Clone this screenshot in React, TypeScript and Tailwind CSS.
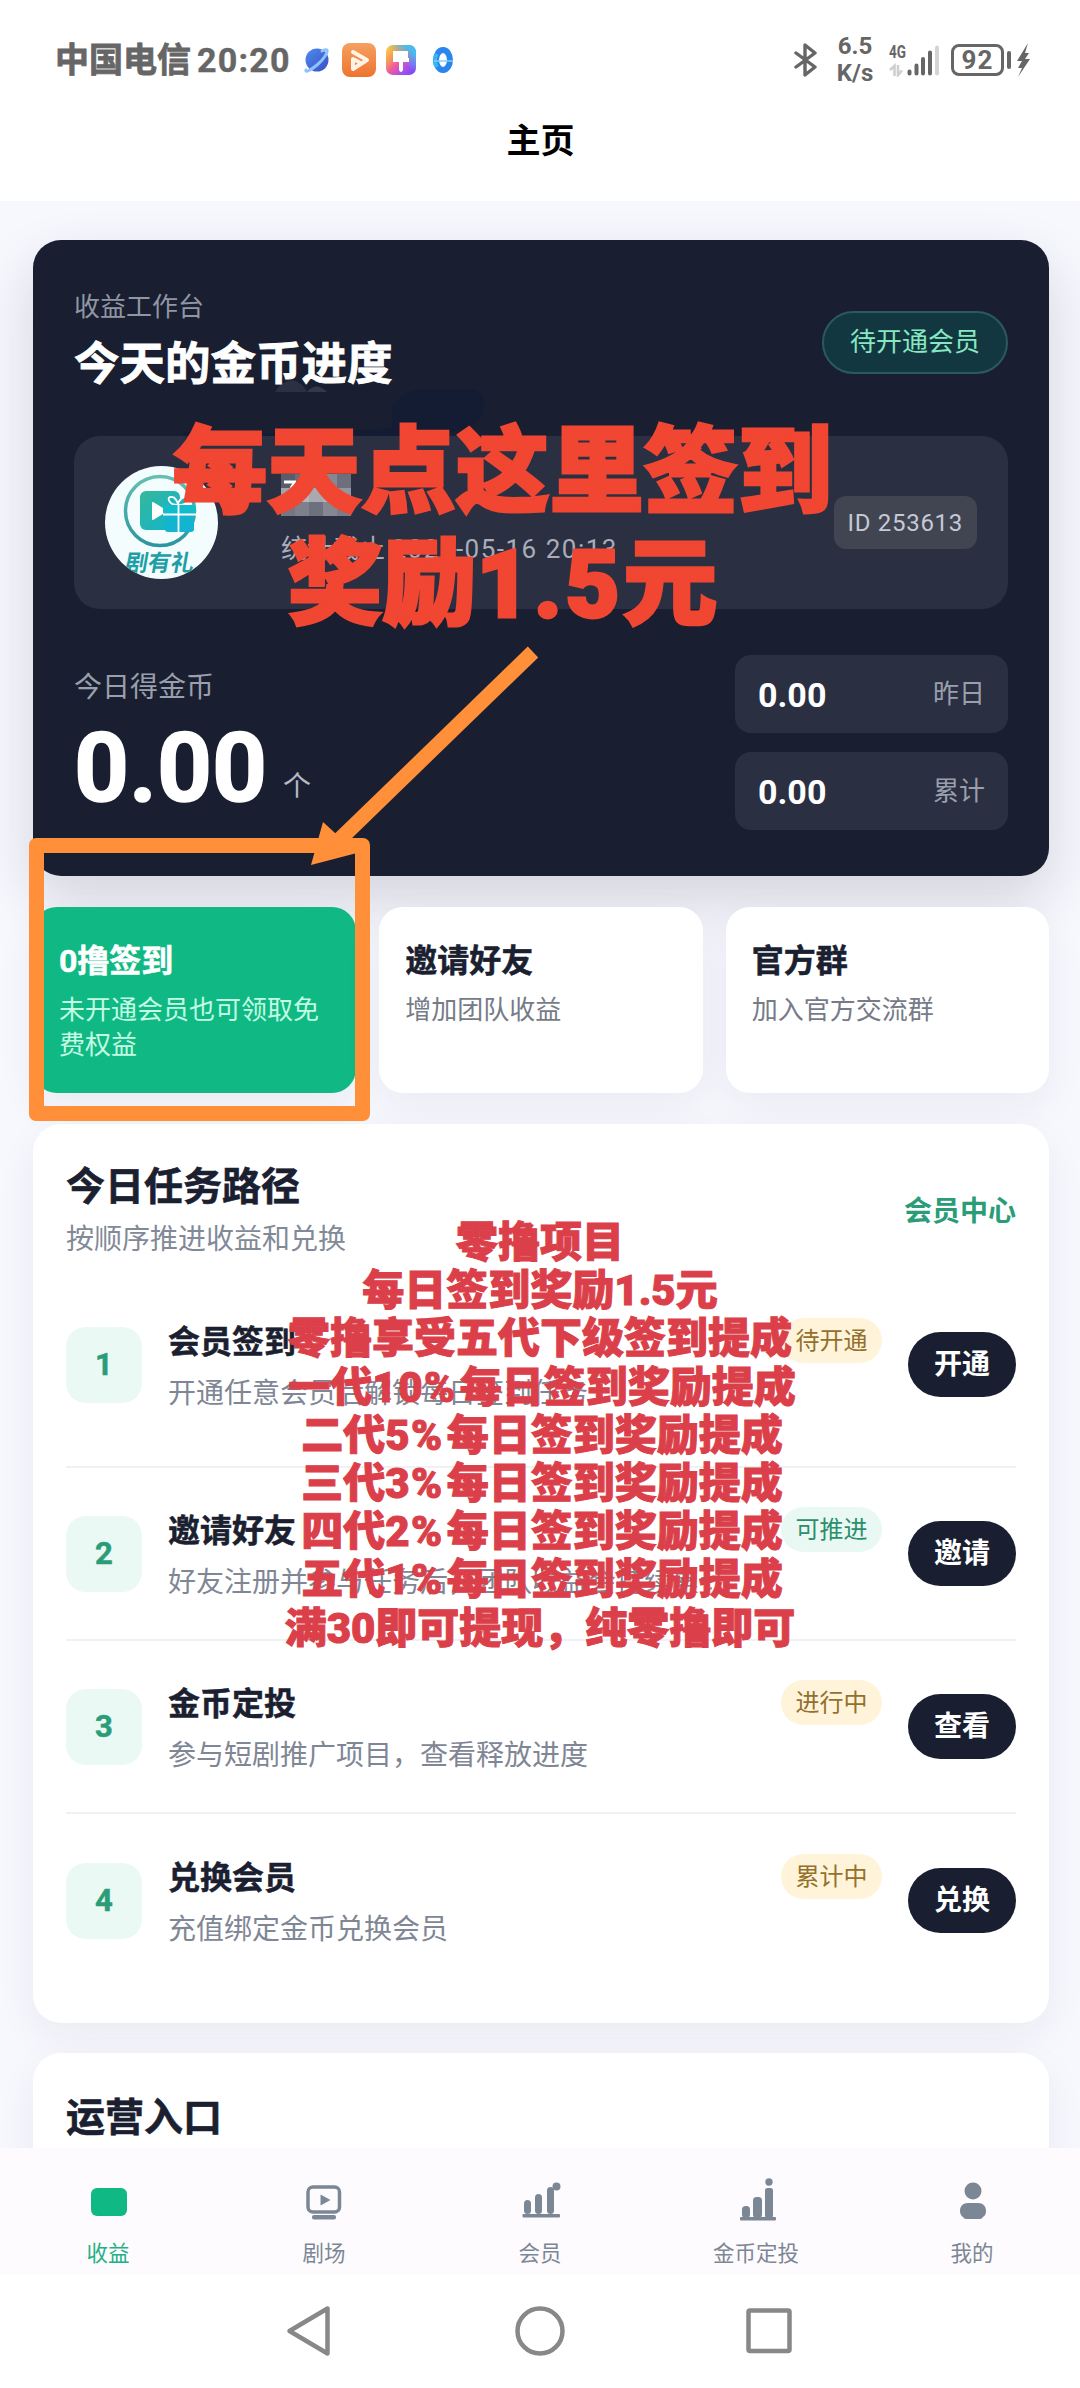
import type { ReactNode } from "react";

interface Task {
  title: string;
  description: string;
  badge: string;
  badgeClass: string;
  action: string;
}

const tasks: Task[] = [
  {
    title: "会员签到",
    description: "开通任意会员后解锁每日签到任务",
    badge: "待开通",
    badgeClass: "bg-[#fff4d9] text-[#94702c]",
    action: "开通",
  },
  {
    title: "邀请好友",
    description: "好友注册并参与任务后，团队收益会持续累计",
    badge: "可推进",
    badgeClass: "bg-[#eaf8f3] text-[#2b8f6c]",
    action: "邀请",
  },
  {
    title: "金币定投",
    description: "参与短剧推广项目，查看释放进度",
    badge: "进行中",
    badgeClass: "bg-[#fff4d9] text-[#94702c]",
    action: "查看",
  },
  {
    title: "兑换会员",
    description: "充值绑定金币兑换会员",
    badge: "累计中",
    badgeClass: "bg-[#fff4d9] text-[#94702c]",
    action: "兑换",
  },
];

const levelRates = [
  { level: "一代", rate: "10%" },
  { level: "二代", rate: "5%" },
  { level: "三代", rate: "3%" },
  { level: "四代", rate: "2%" },
  { level: "五代", rate: "1%" },
];

function StatusBar() {
  return (
    <div className="flex h-[120px] items-center justify-between pl-[55px] pr-[50px] text-[#666]">
      <div className="flex items-center">
        <span className="text-[34px] leading-none font-bold [-webkit-text-stroke:0.8px]">中国电信</span>
        <span className="ml-[6px] w-[94px] text-[34px] leading-none font-bold tracking-[1.200px] [-webkit-text-stroke:0.4px]">20:20</span>
        <svg className="ml-[13px]" width="150" height="36" viewBox="304 42 150 36">
          <defs>
            <linearGradient id="planet" x1="0" y1="0" x2="1" y2="1">
              <stop offset="0" stopColor="#4d8bf0" />
              <stop offset="1" stopColor="#3a4fc4" />
            </linearGradient>
            <linearGradient id="orange" x1="0" y1="0" x2="0" y2="1">
              <stop offset="0" stopColor="#f5a061" />
              <stop offset="1" stopColor="#ee742f" />
            </linearGradient>
            <linearGradient id="rainbow" x1="0" y1="0" x2="1" y2="1">
              <stop offset="0" stopColor="#f6dc3c" />
              <stop offset="0.3" stopColor="#f79a58" />
              <stop offset="0.5" stopColor="#ef5aa0" />
              <stop offset="0.75" stopColor="#a24ff0" />
              <stop offset="1" stopColor="#6a48f0" />
            </linearGradient>
            <linearGradient id="sky" x1="0" y1="1" x2="1" y2="0">
              <stop offset="0.5" stopColor="#3fc0f0" stopOpacity="0" />
              <stop offset="0.85" stopColor="#3fc0f0" />
            </linearGradient>
          </defs>
          <circle cx="317" cy="60" r="11.5" fill="url(#planet)" />
          <path d="M306 70c-1 3 5 0 11-5s11-12 10-15c-1-1-3 0-5 1" fill="none" stroke="#8fc4fa" strokeWidth="3" strokeLinecap="round" />
          <rect x="342" y="43" width="34" height="34" rx="8" fill="url(#orange)" />
          <path d="M353 52l14 8-14 9v-10l6 3" fill="none" stroke="#fff3e6" strokeWidth="4" strokeLinejoin="round" strokeLinecap="round" />
          <rect x="386" y="45" width="30" height="30" rx="7" fill="url(#rainbow)" />
          <rect x="386" y="45" width="30" height="30" rx="7" fill="url(#sky)" />
          <path d="M393 51h15v7h1v4h-6v8q-2 4-4 0v-8h-6z" fill="#fff" />
          <ellipse cx="443" cy="60" rx="7" ry="10" fill="none" stroke="#2a86ee" strokeWidth="6" />
          <path d="M437 54q-4 6 0 13" fill="none" stroke="#35b7f4" strokeWidth="4" />
          <path d="M434 61h19" stroke="#7fd0fb" strokeWidth="1.5" />
        </svg>
      </div>
      <div className="flex items-center">
        <svg width="24" height="36" viewBox="0 0 24 36" fill="none" stroke="#666" strokeWidth="3.4" strokeLinejoin="round" strokeLinecap="round">
          <path d="M2 11l19 14-10 8V3l10 8L2 25" />
        </svg>
        <div className="ml-[17px] flex w-[40px] flex-col items-center text-[24px] leading-[27px] font-bold">
          <span>6.5</span>
          <span>K/s</span>
        </div>
        <div className="relative ml-[14px] h-[34px] w-[52px]">
          <span className="absolute top-0 left-0 origin-left scale-x-75 text-[18px] leading-[17px] font-bold">4G</span>
          <svg className="absolute inset-0" width="52" height="34" viewBox="888 42 52 34">
            <g stroke="#cfcfcf" strokeWidth="2.6" fill="none">
              <path d="M889 69l4.500-4v10M897 64v10l4-4.500" />
            </g>
            <g stroke="#666" strokeWidth="4" strokeLinecap="round">
              <path d="M908.500 70.500v2M915.500 64.500v8M922 58v14.500M929 51.500v21" />
              <path d="M936 46.500v26" stroke="#d4d4d4" />
            </g>
          </svg>
        </div>
        <div className="ml-[10px] flex h-[32px] w-[53px] items-center justify-center rounded-[8px] border-[3px] border-[#666] text-[26px] leading-none font-bold tracking-[1px]">
          92
        </div>
        <div className="ml-[3px] h-[18px] w-1 rounded-sm bg-[#666]" />
        <svg className="ml-[5px]" width="14" height="34" viewBox="0 0 14 34">
          <path d="M12 0L1 18h5l-4 7h4L2 34 14 16H9l4-6H9z" fill="#666" />
        </svg>
      </div>
    </div>
  );
}

function AppLogo() {
  return (
    <div className="h-[113px] w-[113px] shrink-0 overflow-hidden rounded-full bg-[#f4fdfe]">
      <svg width="113" height="113" viewBox="105 466 113 113">
        <defs>
          <linearGradient id="teal" x1="0" y1="0" x2="1" y2="1">
            <stop offset="0" stopColor="#35b89a" />
            <stop offset="1" stopColor="#10b4cf" />
          </linearGradient>
          <linearGradient id="ring" x1="0" y1="0" x2="0" y2="1">
            <stop offset="0" stopColor="#64c0ae" />
            <stop offset="1" stopColor="#2b95a0" />
          </linearGradient>
        </defs>
        <circle cx="160" cy="511" r="34.500" fill="none" stroke="url(#ring)" strokeWidth="3.500" />
        <rect x="140" y="491" width="40" height="39" rx="6" fill="url(#teal)" />
        <path d="M153 503l13 8-13 8z" fill="#fff" stroke="#fff" strokeWidth="2" strokeLinejoin="round" />
        <path d="M178 505c-10 0-12-9-6-8 3 0 6 5 6 8 0-3 3-8 7-8 6-1 4 8-7 8" fill="#19b8c4" stroke="#fff" strokeWidth="1.800" />
        <rect x="163" y="505" width="33" height="9" rx="2" fill="#12bccb" />
        <rect x="165" y="515" width="29" height="17" rx="3" fill="#12b4cf" />
        <path d="M178.500 504v28M163 514.500h33" stroke="#fff" strokeWidth="1.800" />
        <text x="160" y="571" textAnchor="middle" fontSize="23" fontWeight="700" fill="#1f9fa5" transform="translate(99 0) skewX(-10)">
          剧有礼
        </text>
      </svg>
    </div>
  );
}

function Mosaic() {
  const shades = [
    "bg-[#595d6b]", "bg-[#696c7a]", "bg-[#7d7f8b]", "bg-[#858791]", "bg-[#6d707c]",
    "bg-[#a3a4ad]", "bg-[#b6b7be]", "bg-[#a8a9b1]", "bg-[#b0b1b8]", "bg-[#94969f]",
    "bg-[#747784]", "bg-[#7e808c]", "bg-[#6d707d]", "bg-[#858791]", "bg-[#7a7d89]",
  ];
  return (
    <div className="relative grid h-[42px] w-[70px] grid-cols-5 grid-rows-3">
      {shades.map((shade, index) => (
        <div key={index} className={shade} />
      ))}
      <svg className="absolute top-[6px] left-[3px]" width="12" height="9" viewBox="0 0 12 9">
        <path d="M0 2h11l-4 6" fill="none" stroke="#fff" strokeWidth="3" />
      </svg>
    </div>
  );
}

function StatBox({ value, label }: { value: string; label: string }) {
  return (
    <div className="flex h-[78px] items-center justify-between rounded-2xl bg-[#2a3041] px-[23px]">
      <span className="pt-[2px] text-[34px] leading-none font-bold text-white">{value}</span>
      <span className="text-[26px] leading-none text-[#9a9fad]">{label}</span>
    </div>
  );
}

function HeroCard() {
  return (
    <section className="relative h-[636px] rounded-[28px] bg-[#191f30] px-[41px] pt-[51px] shadow-[0_24px_56px_rgba(26,32,48,0.16)]">
      {/* Smudges left above the profile panel */}
      <svg className="absolute top-[130px] left-[150px]" width="340" height="72" viewBox="183 370 340 72">
        <path d="M275 392q6-11 18-12 10 3 14 12z" fill="#2a3142" />
        <path d="M307 392q9-11 20 0z" fill="#343947" />
        <path d="M183 440v-8q100 4 209-4v-20q10-18 30-18l50-1q14 4 12 16-2 20-22 24l-40 11z" fill="#131c32" />
      </svg>
      <div className="relative flex items-center justify-between">
        <div className="pt-[1px]">
          <p className="text-[26px] leading-[30px] text-[#9196a4]">收益工作台</p>
          <h1 className="mt-[18px] text-[45.500px] leading-[50px] font-bold text-white [-webkit-text-stroke:0.8px]">今天的金币进度</h1>
        </div>
        <div className="mt-[3px] flex h-[63px] items-center rounded-full border-2 border-[#2b5a5e] bg-[#133740] px-[26px] text-[26px] leading-none text-[#86e8c1]">
          待开通会员
        </div>
      </div>

      <div className="relative mt-[46px] flex h-[173px] items-center rounded-[26px] bg-[#2a3041] pr-[31px] pl-[31px]">
        <AppLogo />
        <div className="-mt-[7px] ml-[63px] flex flex-1 flex-col">
          <Mosaic />
          <p className="mt-[17px] text-[26px] leading-[32px] whitespace-nowrap text-[#a9adb9]">
            统计截止 <span className="tracking-[1.500px]">2026-05-16 20:13</span>
          </p>
        </div>
        <div className="flex h-[53px] items-center rounded-xl bg-[#414552] px-[14px] text-[24px] leading-none tracking-[0.700px] whitespace-nowrap text-[#c5c9d6]">
          ID 253613
        </div>
      </div>

      <div className="mt-[46px] flex justify-between">
        <div className="pt-[18px]">
          <p className="text-[28px] leading-[30px] text-[#9a9fad]">今日得金币</p>
          <div className="mt-[29px] flex items-end">
            <span className="text-[96px] leading-[72px] font-bold text-white [-webkit-text-stroke:1.500px]">0.00</span>
            <span className="mb-[3px] ml-[16px] text-[28px] leading-[28px] text-[#b4b8c4]">个</span>
          </div>
        </div>
        <div className="flex w-[273px] flex-col gap-[19px]">
          <StatBox value="0.00" label="昨日" />
          <StatBox value="0.00" label="累计" />
        </div>
      </div>
    </section>
  );
}

function QuickCard({ title, text, active = false }: { title: string; text: string; active?: boolean }) {
  return (
    <div
      className={
        active
          ? "rounded-3xl bg-[#10b983] px-[26px] pt-[36px] text-white shadow-[0_14px_40px_rgba(26,32,48,0.06)]"
          : "rounded-3xl bg-white px-[26px] pt-[36px] text-[#1a2030] shadow-[0_14px_40px_rgba(26,32,48,0.06)]"
      }
    >
      <h3 className="text-[32px] leading-[36px] font-bold [-webkit-text-stroke:0.5px]">{title}</h3>
      <p className={active ? "mt-[14px] text-[26px] leading-[35px] text-[#c3fbe3]" : "mt-[14px] text-[26px] leading-[35px] text-[#767b88]"}>
        {text}
      </p>
    </div>
  );
}

function TaskRow({ task, index }: { task: Task; index: number }) {
  return (
    <div
      className={
        index === 0
          ? "flex h-[189px] items-center border-b-2 border-[#f0f1f4] pb-4"
          : "flex h-[173px] items-center border-b-2 border-[#f0f1f4] last:border-b-0"
      }
    >
      <div className="flex h-[76px] w-[76px] shrink-0 items-center justify-center rounded-[20px] bg-[#ebf9f5] text-[31px] leading-none font-bold text-[#2a9d78] [-webkit-text-stroke:0.5px]">
        {index + 1}
      </div>
      <div className="ml-[26px] flex-1">
        <div className="flex h-[45px] items-center justify-between">
          <h3 className="pt-[2px] text-[32px] leading-none font-bold text-[#1a2030] [-webkit-text-stroke:0.5px]">{task.title}</h3>
          <span className={`flex h-[45px] w-[101px] items-center justify-center rounded-full text-[24px] leading-none ${task.badgeClass}`}>
            {task.badge}
          </span>
        </div>
        <p className="mt-[14px] text-[28px] leading-[34px] whitespace-nowrap text-[#7f8695]">{task.description}</p>
      </div>
      <button className="ml-[26px] h-[65px] w-[108px] shrink-0 rounded-full bg-[#191f30] text-[28px] leading-none font-bold text-white">
        {task.action}
      </button>
    </div>
  );
}

function TaskCard() {
  return (
    <section className="h-[899px] rounded-[28px] bg-white px-[33px] pt-[40px] shadow-[0_14px_40px_rgba(26,32,48,0.06)]">
      <div className="flex h-[115px] items-start justify-between">
        <div>
          <h2 className="text-[39px] leading-[46px] font-bold text-[#1a2030] [-webkit-text-stroke:0.6px]">今日任务路径</h2>
          <p className="mt-[13px] text-[28px] leading-[34px] text-[#828997]">按顺序推进收益和兑换</p>
        </div>
        <a className="mt-[32px] text-[28px] leading-[32px] font-bold text-[#2a9d78]">会员中心</a>
      </div>
      {tasks.map((task, index) => (
        <TaskRow key={task.title} task={task} index={index} />
      ))}
    </section>
  );
}

function Tab({ label, active = false, children }: { label: string; active?: boolean; children: ReactNode }) {
  return (
    <div className="flex flex-1 flex-col items-center pt-[27px]">
      <svg width="50" height="50" viewBox="0 0 50 50" fill={active ? "#10b983" : "#7c8795"}>
        {children}
      </svg>
      <span className={active ? "mt-[17px] text-[21.500px] leading-[24px] text-[#22b184]" : "mt-[17px] text-[21.500px] leading-[24px] text-[#7c8795]"}>
        {label}
      </span>
    </div>
  );
}

function TabBar() {
  return (
    <nav className="flex h-[126px] bg-[#fefbfe]">
      <Tab label="收益" active>
        <rect x="8" y="13" width="36" height="28" rx="6" />
      </Tab>
      <Tab label="剧场">
        <rect x="9" y="12" width="31.500" height="25" rx="5" fill="none" stroke="#7c8795" strokeWidth="3.500" />
        <path d="M21.500 19.500v11l10-5.500z" />
        <rect x="13" y="40" width="24" height="4.500" rx="2" />
      </Tab>
      <Tab label="会员">
        <rect x="9" y="25" width="7" height="14" rx="3.500" />
        <rect x="20" y="19" width="7" height="20" rx="3.500" />
        <rect x="32" y="12" width="7" height="27" rx="3.500" />
        <circle cx="41.500" cy="11.500" r="4" />
        <rect x="7.500" y="39" width="37.500" height="3.500" rx="1" />
      </Tab>
      <Tab label="金币定投">
        <rect x="11" y="31" width="8" height="12" rx="3.500" />
        <rect x="22" y="22" width="9" height="21" rx="3.500" />
        <rect x="34" y="13" width="8" height="30" rx="2.500" />
        <circle cx="38" cy="7" r="3.700" />
        <rect x="9" y="42" width="36" height="3.500" rx="1" />
      </Tab>
      <Tab label="我的">
        <circle cx="26" cy="16" r="8.500" />
        <path d="M21 28h10c5 0 8 3 8 8 0 3-1 5-3 6q-1 2-3 2H19q-2 0-3-2-3-2-3-6c0-5 3-8 8-8z" />
      </Tab>
    </nav>
  );
}

function SystemNav() {
  return (
    <div className="flex h-[114px] items-center justify-center bg-white">
      <svg width="520" height="60" viewBox="280 2301 520 60" fill="none" stroke="#888" strokeWidth="4.500" strokeLinejoin="round">
        <path d="M289.500 2331L327.500 2308.500v45z" />
        <circle cx="540" cy="2331" r="22.500" />
        <rect x="748.500" y="2310.500" width="41" height="40.500" rx="1.500" />
      </svg>
    </div>
  );
}

// Hand-drawn notes placed over the page
function Annotations() {
  return (
    <div className="pointer-events-none absolute inset-0">
      <div className="absolute top-[838px] left-[29px] h-[283px] w-[341px] rounded-[7px] border-[15px] border-[#ff8f38]" />
      <svg className="absolute top-[640px] left-[300px]" width="250" height="235" viewBox="300 640 250 235">
        <path d="M533 652L335 844" stroke="#ff8f38" strokeWidth="15" />
        <path d="M323 822L311 865l46-12z" fill="#ff8f38" />
      </svg>
      <div className="absolute top-[417px] left-[170px] w-[665px] text-center text-[94.200px] leading-[112px] font-black whitespace-nowrap text-[#f04632] [-webkit-text-stroke:3px]">
        <p>每天点这里签到</p>
        <p>
          奖励<span className="tracking-[3px]">1.5</span>元
        </p>
      </div>
      <div className="absolute top-[1219px] left-[237px] w-[606px] text-center text-[42px] leading-[48.200px] font-black whitespace-nowrap text-[#db3f49] [-webkit-text-stroke:1px]">
        <p>零撸项目</p>
        <p>每日签到奖励1.5元</p>
        <p>零撸享受五代下级签到提成</p>
        {levelRates.map(({ level, rate }) => (
          <p key={level} className="pl-1">
            {level}
            <span className="mr-[3px] tracking-[1.500px]">{rate}</span>
            每日签到奖励提成
          </p>
        ))}
        <p>满30即可提现，纯零撸即可</p>
      </div>
    </div>
  );
}

export default function App() {
  return (
    <div className="relative flex h-[2388px] w-[1080px] flex-col overflow-hidden bg-[#f7f7fe] font-[Roboto,'Noto_Sans_CJK_SC',sans-serif]">
      <header className="h-[201px] shrink-0 bg-white">
        <StatusBar />
        <p className="pt-[4px] pl-[1px] text-center text-[34px] leading-[34px] font-bold text-black">主页</p>
      </header>
      <main className="h-[1947px] overflow-hidden px-[33px] pt-[39px] pr-[31px]">
        <HeroCard />
        <div className="relative mt-[31px] grid h-[186px] grid-cols-3 gap-[23px]">
          <QuickCard title="0撸签到" text="未开通会员也可领取免费权益" active />
          <QuickCard title="邀请好友" text="增加团队收益" />
          <QuickCard title="官方群" text="加入官方交流群" />
        </div>
        <div className="relative mt-[31px]">
          <TaskCard />
        </div>
        <section className="relative mt-[30px] h-[200px] rounded-[28px] bg-white px-[33px] pt-[42px] shadow-[0_14px_40px_rgba(26,32,48,0.06)]">
          <h2 className="text-[39px] leading-[46px] font-bold text-[#1a2030] [-webkit-text-stroke:0.6px]">运营入口</h2>
        </section>
      </main>
      <TabBar />
      <SystemNav />
      <Annotations />
    </div>
  );
}
